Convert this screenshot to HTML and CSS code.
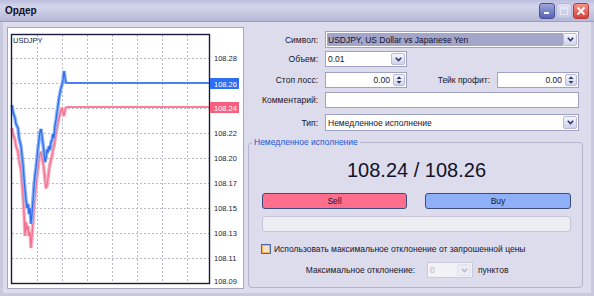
FILE: index.html
```html
<!DOCTYPE html>
<html lang="ru">
<head>
    <meta charset="UTF-8">
    <title>Ордер</title>
    <link rel="stylesheet" href="styles.css">
</head>
<body>
    <div class="window">
        <div class="titlebar">
            <span class="title">Ордер</span>
            <div class="caption-buttons">
                <span class="cap-btn cap-min">
                    <svg width="8" height="8" viewBox="0 0 8 8"><rect x="1" y="5" width="5" height="2" fill="#fff"/></svg>
                </span>
                <span class="cap-btn cap-max">
                    <svg width="8" height="8" viewBox="0 0 8 8"><rect x="0.5" y="0.5" width="7" height="7" fill="none" stroke="#e8e8f4" stroke-width="1"/><rect x="0.5" y="0.5" width="7" height="1.5" fill="#e8e8f4"/></svg>
                </span>
                <span class="cap-btn cap-close">
                    <svg width="10" height="10" viewBox="0 0 10 10"><path d="M1.5 1.5 L8.5 8.5 M8.5 1.5 L1.5 8.5" stroke="#fff" stroke-width="1.8"/></svg>
                </span>
            </div>
        </div>

        <div class="content">
            <!-- tick chart -->
            <div class="chart-frame">
                <svg class="chart" width="235" height="260" viewBox="8 28 235 260">
                    <g class="grid">
                        <line x1="37.5" y1="35" x2="37.5" y2="283"/>
                        <line x1="62.5" y1="35" x2="62.5" y2="283"/>
                        <line x1="87.5" y1="35" x2="87.5" y2="283"/>
                        <line x1="112.5" y1="35" x2="112.5" y2="283"/>
                        <line x1="137.5" y1="35" x2="137.5" y2="283"/>
                        <line x1="162.5" y1="35" x2="162.5" y2="283"/>
                        <line x1="187.5" y1="35" x2="187.5" y2="283"/>
                        <line x1="12" y1="58.5" x2="209" y2="58.5"/>
                        <line x1="12" y1="83.5" x2="209" y2="83.5"/>
                        <line x1="12" y1="108.5" x2="209" y2="108.5"/>
                        <line x1="12" y1="133.5" x2="209" y2="133.5"/>
                        <line x1="12" y1="158.5" x2="209" y2="158.5"/>
                        <line x1="12" y1="183.5" x2="209" y2="183.5"/>
                        <line x1="12" y1="208.5" x2="209" y2="208.5"/>
                        <line x1="12" y1="233.5" x2="209" y2="233.5"/>
                        <line x1="12" y1="258.5" x2="209" y2="258.5"/>
                    </g>

                    <g class="bid">
                        <polyline class="band" points="12,128 13,134 15,140 16,146 18,152 19,160 21,170 22,182 23,196 24,212 25,236 26,222 27,230 28,226 29,236 30,232 31,248 32,236 33,222 34,208 35,196 36,186 37,176 38,168 39,160 40,154 41,152 42,158 43,162 44,170 45,180 46,188 47,186 48,178 49,170 50,164 51,160 52,156 53,150 54,146 55,140 56,134 57,128 58,122 59,118 60,114 61,110 62,108 63,112 64,116 65,110 66,107"/>
                        <polyline class="core" points="12,128 13,134 15,140 16,146 18,152 19,160 21,170 22,182 23,196 24,212 25,236 26,222 27,230 28,226 29,236 30,232 31,248 32,236 33,222 34,208 35,196 36,186 37,176 38,168 39,160 40,154 41,152 42,158 43,162 44,170 45,180 46,188 47,186 48,178 49,170 50,164 51,160 52,156 53,150 54,146 55,140 56,134 57,128 58,122 59,118 60,114 61,110 62,108 63,112 64,116 65,110 66,107"/>
                        <rect class="price-line" x="66" y="106" width="144" height="2"/>
                    </g>

                    <g class="ask">
                        <polyline class="band" points="12,105 13,112 15,118 16,124 18,128 19,138 21,146 22,156 23,165 24,178 25,190 26,200 27,208 28,204 29,214 30,208 31,224 32,214 33,200 34,186 35,175 36,168 37,158 38,148 39,140 40,132 41,129 42,136 43,144 44,152 45,162 46,158 47,150 48,152 49,146 50,150 51,142 52,140 53,134 54,138 55,126 56,120 57,112 58,106 59,98 60,93 61,88 62,85 63,80 64,71 65,78 66,83"/>
                        <polyline class="core" points="12,105 13,112 15,118 16,124 18,128 19,138 21,146 22,156 23,165 24,178 25,190 26,200 27,208 28,204 29,214 30,208 31,224 32,214 33,200 34,186 35,175 36,168 37,158 38,148 39,140 40,132 41,129 42,136 43,144 44,152 45,162 46,158 47,150 48,152 49,146 50,150 51,142 52,140 53,134 54,138 55,126 56,120 57,112 58,106 59,98 60,93 61,88 62,85 63,80 64,71 65,78 66,83"/>
                        <rect class="price-line" x="66" y="82" width="144" height="2"/>
                    </g>

                    <rect class="plot" x="11.5" y="34.5" width="198" height="249"/>
                    <text class="symbol-name" x="13" y="43">USDJPY</text>

                    <g class="axis">
                        <text x="214" y="61">108.28</text>
                        <text x="214" y="136">108.22</text>
                        <text x="214" y="161">108.20</text>
                        <text x="214" y="186">108.17</text>
                        <text x="214" y="211">108.15</text>
                        <text x="214" y="236">108.13</text>
                        <text x="214" y="261">108.11</text>
                        <text x="214" y="284">108.09</text>
                    </g>
                    <rect class="tag-ask" x="210" y="78" width="29" height="11"/>
                    <text class="tag-text" x="214" y="86.5">108.26</text>
                    <rect class="tag-bid" x="210" y="102" width="29" height="11"/>
                    <text class="tag-text" x="214" y="110.5">108.24</text>
                </svg>
            </div>

            <!-- order form -->
            <div class="order-panel">
                <div class="row row-symbol">
                    <span class="label">Символ:</span>
                    <div class="combo wide">
                        <span class="combo-text selected">USDJPY, US Dollar vs Japanese Yen</span>
                        <span class="drop-btn"><svg width="7" height="5" viewBox="0 0 7 5"><polyline points="0.8,0.8 3.5,3.6 6.2,0.8"/></svg></span>
                    </div>
                </div>
                <div class="row row-volume">
                    <span class="label">Объем:</span>
                    <div class="combo short">
                        <span class="combo-text">0.01</span>
                        <span class="drop-btn"><svg width="7" height="5" viewBox="0 0 7 5"><polyline points="0.8,0.8 3.5,3.6 6.2,0.8"/></svg></span>
                    </div>
                </div>
                <div class="row row-stops">
                    <span class="label">Стоп лосс:</span>
                    <div class="spin-field">
                        <span class="spin-text">0.00</span>
                        <span class="spin"><svg width="6" height="10" viewBox="0 0 6 10"><path d="M0.5 4 L3 1.2 L5.5 4 Z M0.5 6 L3 8.8 L5.5 6 Z"/></svg></span>
                    </div>
                    <span class="label label-tp">Тейк профит:</span>
                    <div class="spin-field">
                        <span class="spin-text">0.00</span>
                        <span class="spin"><svg width="6" height="10" viewBox="0 0 6 10"><path d="M0.5 4 L3 1.2 L5.5 4 Z M0.5 6 L3 8.8 L5.5 6 Z"/></svg></span>
                    </div>
                </div>
                <div class="row row-comment">
                    <span class="label">Комментарий:</span>
                    <div class="text-input"></div>
                </div>
                <div class="row row-type">
                    <span class="label">Тип:</span>
                    <div class="combo wide">
                        <span class="combo-text">Немедленное исполнение</span>
                        <span class="drop-btn"><svg width="7" height="5" viewBox="0 0 7 5"><polyline points="0.8,0.8 3.5,3.6 6.2,0.8"/></svg></span>
                    </div>
                </div>

                <fieldset class="group">
                    <legend>Немедленное исполнение</legend>
                    <div class="quote">108.24 / 108.26</div>
                    <div class="trade-buttons">
                        <button class="btn-sell">Sell</button>
                        <button class="btn-buy">Buy</button>
                    </div>
                    <div class="progress"></div>
                    <div class="check-row">
                        <span class="checkbox"></span>
                        <span>Использовать максимальное отклонение от запрошенной цены</span>
                    </div>
                    <div class="deviation-row">
                        <span class="deviation-label">Максимальное отклонение:</span>
                        <div class="combo disabled">
                            <span class="combo-text">0</span>
                            <span class="drop-btn"><svg width="7" height="5" viewBox="0 0 7 5"><polyline points="0.8,0.8 3.5,3.6 6.2,0.8"/></svg></span>
                        </div>
                        <span class="units">пунктов</span>
                    </div>
                </fieldset>
            </div>
        </div>
    </div>
</body>
</html>
```

FILE: styles.css
```css
* {
    box-sizing: border-box;
}
body {
    margin: 0;
    font-family: "Liberation Sans", Arial, sans-serif;
    font-size: 8.5px;
    color: #15152f;
    background-color: #dcdcec;
}
.window {
    width: 594px;
    height: 296px;
    display: flex;
    flex-direction: column;
    background-color: #dcdcec;
    overflow: hidden;
}
.titlebar {
    height: 22px;
    flex: none;
    display: flex;
    align-items: center;
    justify-content: space-between;
    padding: 0 5px 0 5px;
    background: linear-gradient(#bcbfdf 0%, #d3d5eb 30%, #c5c7e1 65%, #b6b8d7 100%);
    border-bottom: 1px solid #9a9cc2;
}
.title {
    font-size: 10px;
    font-weight: bold;
    color: #0e0e24;
}
.caption-buttons {
    display: flex;
    gap: 1px;
}
.cap-btn {
    width: 16px;
    height: 16px;
    border-radius: 3px;
    display: flex;
    align-items: center;
    justify-content: center;
}
.cap-min {
    background: linear-gradient(#9ea6dc, #5664b4);
    border: 1px solid #4a5296;
}
.cap-max {
    background: linear-gradient(#dcdff2, #c3c7e4);
    border: 1px solid #b4b8d8;
}
.cap-close {
    background: linear-gradient(#f2958a, #d8403a);
    border: 1px solid #b03a40;
}
.content {
    flex: 1;
    display: flex;
    gap: 4px;
    padding: 5px 8px 0 4px;
    border: 3px solid #c9c9de;
    border-top: 0;
}

/* chart */
.chart-frame {
    width: 237px;
    height: 262px;
    flex: none;
    background-color: #fff;
    border: 1px solid #a6a6bc;
}
.chart {
    display: block;
}
.grid line {
    stroke: #b9b9c6;
    stroke-width: 1;
    stroke-dasharray: 2 2;
    shape-rendering: crispEdges;
}
.plot {
    fill: none;
    stroke: #1b1b3e;
    stroke-width: 1.4;
}
.band {
    fill: none;
    stroke-width: 3.6;
    stroke-linejoin: bevel;
}
.core {
    fill: none;
    stroke-width: 1.2;
}
.ask .band { stroke: #8ab1f8; }
.ask .core { stroke: #2e6cec; }
.ask .price-line { fill: #4a82f4; }
.bid .band { stroke: #f9adc0; }
.bid .core { stroke: #f0728f; }
.bid .price-line { fill: #f7809a; }
.symbol-name {
    font-family: "Liberation Sans", Arial, sans-serif;
    font-size: 7.5px;
    fill: #1c1c3a;
}
.axis text {
    font-family: "Liberation Sans", Arial, sans-serif;
    font-size: 7.5px;
    fill: #1c1c3a;
}
.tag-ask { fill: #2d6ef2; }
.tag-bid { fill: #f6607e; }
.tag-text {
    font-family: "Liberation Sans", Arial, sans-serif;
    font-size: 7.5px;
    fill: #fff;
}

/* form */
.order-panel {
    width: 335px;
    flex: none;
    display: flex;
    flex-direction: column;
    padding-top: 4px;
}
.row {
    display: flex;
    align-items: center;
    height: 16px;
    padding-right: 4px;
    flex: none;
}
.row-symbol { height: 17px; margin-bottom: 3px; }
.row-volume { margin-bottom: 5px; }
.row-stops { margin-bottom: 4px; }
.row-comment { margin-bottom: 6px; }
.row-type { height: 17px; }
.label {
    width: 70px;
    margin-right: 7px;
    text-align: right;
    white-space: nowrap;
}
.label-tp {
    width: auto;
    flex: 1;
}
.combo {
    height: 100%;
    display: flex;
    border: 1px solid #9ea2c4;
    background-color: #fff;
    padding: 1px;
}
.combo.wide { flex: 1; }
.combo.short { width: 82px; }
.combo-text {
    flex: 1;
    padding-left: 1px;
    display: flex;
    align-items: center;
    white-space: nowrap;
}
.combo-text.selected {
    background-color: #a3a5c9;
}
.drop-btn {
    width: 14px;
    display: flex;
    align-items: center;
    justify-content: center;
    background: linear-gradient(#f6f6fc, #cfd2ea);
    border: 1px solid #b9bcd9;
    border-radius: 2px;
}
.drop-btn polyline {
    fill: none;
    stroke: #2b3670;
    stroke-width: 1.6;
}
.spin-field {
    width: 82px;
    height: 100%;
    display: flex;
    border: 1px solid #9ea2c4;
    background-color: #fff;
    padding: 1px;
}
.spin-text {
    flex: 1;
    display: flex;
    align-items: center;
    justify-content: flex-end;
    padding-right: 3px;
}
.spin {
    width: 12px;
    display: flex;
    align-items: center;
    justify-content: center;
    background: linear-gradient(#f6f6fc, #d2d5ec);
    border: 1px solid #b9bcd9;
    border-radius: 2px;
}
.spin path {
    fill: #2b3670;
}
.text-input {
    flex: 1;
    height: 100%;
    border: 1px solid #9ea2c4;
    background-color: #fff;
}

/* execution group */
.group {
    margin: 6px 0 0 0;
    padding: 0 11px 0 13px;
    height: 151px;
    min-width: 0;
    border: 1px solid #b3b3cb;
    border-radius: 4px;
    display: flex;
    flex-direction: column;
}
.group legend {
    padding: 0 2px;
    margin-left: -10px;
    line-height: 11px;
    color: #2255d6;
}
.quote {
    margin-top: 10px;
    font-size: 20px;
    line-height: 24px;
    text-align: center;
    color: #111128;
}
.trade-buttons {
    margin-top: 11px;
    display: flex;
    justify-content: space-between;
}
.trade-buttons button {
    height: 16px;
    padding: 0;
    font-family: "Liberation Sans", Arial, sans-serif;
    font-size: 8.5px;
    color: #15152f;
    border: 1px solid #3e4c7c;
    border-radius: 3px;
}
.btn-sell {
    width: 145px;
    background-color: #ff6f8d;
}
.btn-buy {
    width: 146px;
    background-color: #8fb0f9;
}
.progress {
    margin-top: 7px;
    height: 16px;
    border: 1px solid #c4c4d6;
    border-radius: 3px;
    background-color: #ececf3;
}
.check-row {
    margin-top: 12px;
    height: 9px;
    display: flex;
    align-items: center;
    gap: 3px;
    margin-left: -1px;
    white-space: nowrap;
}
.checkbox {
    width: 10px;
    height: 10px;
    flex: none;
    border: 1px solid #4c68ac;
    background-color: #f6e2c4;
    box-shadow: inset 0 0 0 1px #f2b35c;
}
.deviation-row {
    margin-top: 9px;
    height: 16px;
    display: flex;
    align-items: center;
}
.deviation-label {
    width: 153px;
    text-align: right;
    white-space: nowrap;
}
.combo.disabled {
    width: 46px;
    margin-left: 12px;
    border-color: #cacadb;
    background-color: #f1f1f6;
}
.combo.disabled .combo-text {
    color: #b2b2c4;
}
.combo.disabled .drop-btn {
    background: #ececf4;
    border-color: #e2e2ec;
}
.combo.disabled .drop-btn polyline {
    stroke: #b8b8cc;
}
.units {
    margin-left: 5px;
}
```
